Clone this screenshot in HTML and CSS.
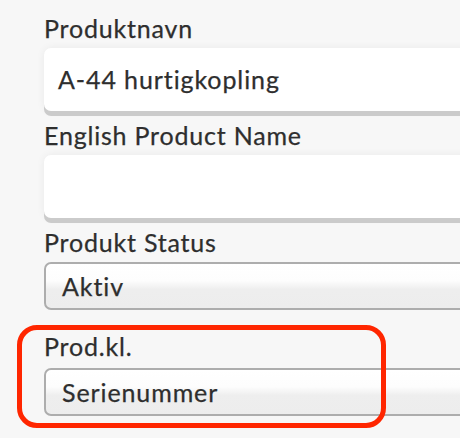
FILE: index.html
```html
<!DOCTYPE html>
<html lang="no">
<head>
<meta charset="utf-8">
<link rel="stylesheet" href="styles.css">
</head>
<body>
<div class="form">
  <div class="field">
    <div class="label">Produktnavn</div>
    <div class="input">A-44 hurtigkopling</div>
  </div>
  <div class="field">
    <div class="label">English Product Name</div>
    <div class="input"></div>
  </div>
  <div class="field">
    <div class="label">Produkt Status</div>
    <div class="select">Aktiv</div>
  </div>
  <div class="field field-highlighted">
    <div class="label">Prod.kl.</div>
    <div class="select">Serienummer</div>
  </div>
</div>
<div class="highlight"></div>
</body>
</html>
```

FILE: styles.css
```css
html, body {
  margin: 0;
  padding: 0;
}
body {
  background: #f7f7f7;
  font-family: "Lato", "Open Sans", sans-serif;
  color: #2e2e2e;
  width: 460px;
  height: 438px;
  overflow: hidden;
  position: relative;
}
.form {
  display: flex;
  flex-direction: column;
  gap: 4px;
  padding: 13px 0 0 44px;
  width: 520px;
}
.field {
  display: flex;
  flex-direction: column;
  gap: 5px;
}
.field-highlighted {
  margin-top: 17px;
  gap: 7px;
}
.label {
  font-size: 25px;
  line-height: 30px;
  height: 30px;
  letter-spacing: 0.8px;
  -webkit-text-stroke: 0.25px #2e2e2e;
}
.input {
  box-sizing: border-box;
  height: 63px;
  margin-bottom: 5px;
  padding: 16px 14px;
  font-size: 25px;
  line-height: 30px;
  letter-spacing: 0.9px;
  -webkit-text-stroke: 0.25px #2e2e2e;
  background: #fff;
  border-radius: 7px;
  box-shadow: 0 5px 0 #cbcbcb, 0 0 8px rgba(0, 0, 0, 0.06);
}
.select {
  box-sizing: border-box;
  height: 48px;
  padding: 7px 16px;
  font-size: 25px;
  line-height: 30px;
  letter-spacing: 0.9px;
  -webkit-text-stroke: 0.25px #2e2e2e;
  border: 2px solid #adadad;
  border-radius: 7px;
  background: linear-gradient(#ffffff 0%, #fdfdfd 38%, #eeeeee 58%, #ededed 100%);
}
.highlight {
  position: absolute;
  left: 17px;
  top: 325px;
  width: 369px;
  height: 103px;
  box-sizing: border-box;
  border: 5px solid #ff2600;
  border-radius: 20px;
}
```
